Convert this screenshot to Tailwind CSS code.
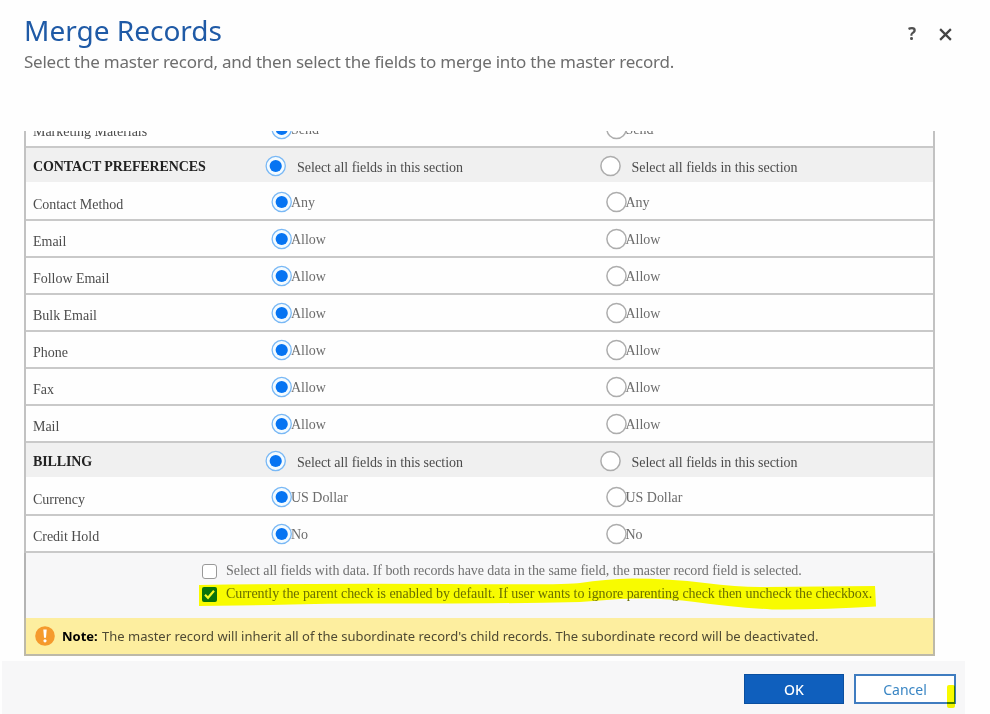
<!DOCTYPE html>
<html lang="en">
<head>
<meta charset="utf-8">
<title>Merge Records</title>
<script src="https://cdn.jsdelivr.net/npm/@tailwindcss/browser@4"></script>
</head>
<body class="w-[990px] h-[714px] overflow-hidden bg-[#fefefe] font-['Noto_Sans','Open_Sans',sans-serif]">
<div class="flex h-full flex-col">
  <header class="flex h-[131px] shrink-0 justify-between pl-6 pr-[38px]">
    <div class="pt-3">
      <h1 class="h-9 text-[28px] leading-9 text-[#1f5aa6] whitespace-nowrap">Merge Records</h1>
      <p class="mt-[2px] text-[17px] leading-6 tracking-[-0.228px] text-[#6e6e6e] whitespace-nowrap">Select the master record, and then select the fields to merge into the master record.</p>
    </div>
    <div class="flex h-6 items-center gap-[21px] mt-[22px]">
      <span class="text-[17px] font-bold leading-6 text-[#505050] w-[10px]">?</span>
      <svg class="size-[13px]" viewBox="0 0 14 14" fill="none" stroke="#444" stroke-width="2.4"><path d="M1.2 1.2 12.8 12.8M12.8 1.2 1.2 12.8"/></svg>
    </div>
  </header>

  <main class="ml-6 w-[911px] shrink-0 font-['Liberation_Serif',serif] text-[14px] leading-4 tracking-[-0.03px] text-[#4c4c4c]">
    <div id="rows" class="border-x-2 border-[#c2c2c2]"></div>

    <div class="relative h-[65px] border-x-2 border-[#b4b4b4] bg-[#f7f7f8] pl-[176px] pt-[9px] whitespace-nowrap text-[#707070] tracking-[-0.06px]">
      <svg class="absolute left-[173px] top-[23px]" width="680" height="36" viewBox="199 576 680 36" fill="#f8fb00"><path d="M199 585Q330 583 450 584T580 583Q605 579 632 578.500Q670 578.500 705 583T765 587L875 586L876 606.500Q820 610 772 609.500Q730 607 695 602T620 599L580 602Q480 604 400 603.500T270 605L199 606Z"/></svg>
      <label class="relative flex h-[23px] items-start">
        <span class="mt-[2px] size-[15px] rounded-[3px] border border-[#999] bg-white"></span>
        <span class="ml-[9px] mt-px">Select all fields with data. If both records have data in the same field, the master record field is selected.</span>
      </label>
      <label class="relative flex h-[23px] items-start text-[#6a6f00]">
        <span class="mt-[2px] flex size-[15px] items-center justify-center rounded-[2px] bg-[#08730a]">
          <svg class="size-[15px]" viewBox="0 0 15 15" fill="none" stroke="#f4fa20" stroke-width="2.2"><path d="M3 7.800 6 10.800 12 3.800"/></svg>
        </span>
        <span class="ml-[9px] mt-px">Currently the parent check is enabled by default. If user wants to ignore parenting check then uncheck the checkbox.</span>
      </label>
    </div>

    <div class="flex h-[38px] items-center border-x-2 border-b-2 border-[#bdb9a8] bg-[#fdee9f] pl-[9px] font-['Noto_Sans',sans-serif] text-[13px] tracking-normal text-[#4f4a33] whitespace-nowrap">
      <svg class="size-5 shrink-0" viewBox="0 0 20 20"><circle cx="10" cy="10" r="9.800" fill="#f59a2d"/><path d="M8.300 3.500h3.400l-.7 8.200H9z" fill="#fff"/><circle cx="10" cy="14.800" r="1.600" fill="#fff"/></svg>
      <b class="ml-[7px] w-[40px] text-black">Note:</b>
      <span>The master record will inherit all of the subordinate record's child records. The subordinate record will be deactivated.</span>
    </div>
  </main>

  <footer class="ml-[2px] mt-[5px] flex h-[54px] w-[963px] shrink-0 justify-end gap-[10px] bg-[#f7f7f8] pr-[9px] pt-[13px] text-[14px]">
    <button class="h-[30px] w-[100px] border border-[#0a4f9f] bg-[#0f5fbd] font-medium text-white">OK</button>
    <button class="relative h-[30px] w-[102px] border-2 border-[#3f7cc0] bg-white text-[#3a86c4]">Cancel
      <span class="absolute -bottom-[6px] -right-[1px] h-[23px] w-[8px] rounded-[2px] bg-[#f8fb00] mix-blend-multiply"></span>
    </button>
  </footer>
</div>

<script>
const rows = [
  ['clip', 'Marketing Materials', 'Send'],
  ['section', 'CONTACT PREFERENCES'],
  ['first', 'Contact Method', 'Any'],
  ['row', 'Email', 'Allow'],
  ['row', 'Follow Email', 'Allow'],
  ['row', 'Bulk Email', 'Allow'],
  ['row', 'Phone', 'Allow'],
  ['row', 'Fax', 'Allow'],
  ['row', 'Mail', 'Allow'],
  ['section', 'BILLING'],
  ['first', 'Currency', 'US Dollar'],
  ['row', 'Credit Hold', 'No'],
];
const on = '<svg class="size-[22px] shrink-0" viewBox="0 0 22 22"><circle cx="10.700" cy="11" r="9.600" fill="#f4fbff" stroke="#79b8f5" stroke-width="1.300"/><circle cx="10.700" cy="11" r="6.100" fill="#0674f2"/></svg>';
const off = '<svg class="size-[22px] shrink-0" viewBox="0 0 22 22"><circle cx="10.500" cy="11" r="9.600" fill="#fff" stroke="#adadad" stroke-width="1.500"/></svg>';
const shell = {
  clip: 'h-[17px] border-b-2 flex-col justify-end overflow-hidden',
  section: 'h-[34px] bg-[#f0f0f0]',
  first: 'h-[39px] border-b-2 pt-[2px]',
  row: 'h-[37px] border-b-2',
};
document.getElementById('rows').innerHTML = rows.map(([kind, label, value]) => {
  const body = kind === 'section'
    ? `<b class="mt-[11px] w-[233px] pl-[7px] text-[#222] tracking-[-0.12px]">${label}</b>
       <div class="flex w-[334.5px] pl-[6px] pt-[7px]">${on}<span class="ml-[10px] mt-[5px] tracking-[-0.05px]">Select all fields in this section</span></div>
       <div class="flex pl-[6px] pt-[7px]">${off}<span class="ml-[10px] mt-[5px] tracking-[-0.05px]">Select all fields in this section</span></div>`
    : `<span class="mt-[13px] w-[233px] pl-[7px]">${label}</span>
       <div class="flex w-[334.5px] pl-[12px] pt-[7px]">${on}<span class="-ml-[2px] mt-[4px] text-[#6c6c6c]">${value}</span></div>
       <div class="flex pl-[12px] pt-[7px]">${off}<span class="-ml-[2px] mt-[4px] text-[#6c6c6c]">${value}</span></div>`;
  return `<div class="flex border-[#c9c9c9] whitespace-nowrap ${shell[kind]}">${kind === 'clip' ? `<div class="flex h-[35px] shrink-0">${body}</div>` : body}</div>`;
}).join('');
</script>
</body>
</html>
